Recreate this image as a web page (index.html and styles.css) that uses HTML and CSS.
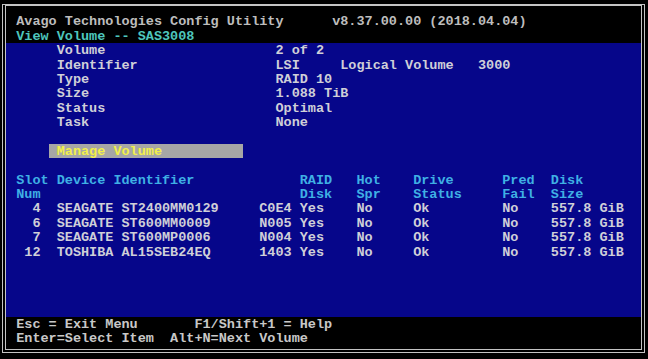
FILE: index.html
```html
<!DOCTYPE html>
<html>

<head>
  <title>View Volume</title>
  <link rel="stylesheet" href="styles.css">
</head>

<body>
  <div class="screen">
    <div class="frame">

      <!-- header rows -->
      <div class="top">
        <div class="line title">Avago Technologies Config Utility      v8.37.00.00 (2018.04.04)</div>
        <div class="line subtitle">View Volume -- SAS3008</div>
      </div>

      <!-- blue panel -->
      <div class="panel">
        <div class="line">     Volume                     2 of 2</div>
        <div class="line">     Identifier                 LSI     Logical Volume   3000</div>
        <div class="line">     Type                       RAID 10</div>
        <div class="line">     Size                       1.088 TiB</div>
        <div class="line">     Status                     Optimal</div>
        <div class="line">     Task                       None</div>
        <div class="line"></div>
        <div class="line">    <span class="selected"> Manage Volume          </span></div>
        <div class="line"></div>
        <div class="line heading">Slot Device Identifier             RAID   Hot    Drive      Pred  Disk</div>
        <div class="line heading">Num                                Disk   Spr    Status     Fail  Size</div>
        <div class="line">  4  SEAGATE ST2400MM0129     C0E4 Yes    No     Ok         No    557.8 GiB</div>
        <div class="line">  6  SEAGATE ST600MM0009      N005 Yes    No     Ok         No    557.8 GiB</div>
        <div class="line">  7  SEAGATE ST600MP0006      N004 Yes    No     Ok         No    557.8 GiB</div>
        <div class="line"> 12  TOSHIBA AL15SEB24EQ      1403 Yes    No     Ok         No    557.8 GiB</div>
      </div>

      <!-- key help -->
      <div class="bottom">
        <div class="line">Esc = Exit Menu       F1/Shift+1 = Help</div>
        <div class="line">Enter=Select Item  Alt+N=Next Volume</div>
      </div>

    </div>
  </div>
</body>

</html>
```

FILE: styles.css
```css
body {
  margin: 0;
  padding: 0;
  background-color: #000;
  font-family: "Liberation Mono", monospace;
  font-size: 13.5px;
  font-weight: bold;
  color: #c8c8c8;
}

/* whole text-mode screen, 80x25 cells of 8.1 x 14.4 */
.screen {
  width: 648px;
  height: 359px;
  box-sizing: border-box;
  padding: 4px 3px 0 2px;
}

.frame {
  height: 349px;
  box-sizing: border-box;
  border: 4px double #c4c4c4;
  border-top: 2px solid #c4c4c4;
  padding-top: 8.4px;
}

.line {
  height: 14.4px;
  line-height: 16.4px;
  white-space: pre;
  padding-left: 10.2px;
}

/* header */
.title {
  color: #bdbdbd;
}

.subtitle {
  color: #4ec6bc;
}

/* blue panel */
.panel {
  height: 273.6px;
  background-color: #06068a;
  color: #cfcfd8;
}

.panel .heading {
  color: #3fb0e4;
}

.selected {
  display: inline-block;
  height: 14.4px;
  vertical-align: top;
  background-color: #a6a6a6;
  color: #f2f04a;
}

/* footer */
.bottom {
  color: #c8c8c8;
}
```
